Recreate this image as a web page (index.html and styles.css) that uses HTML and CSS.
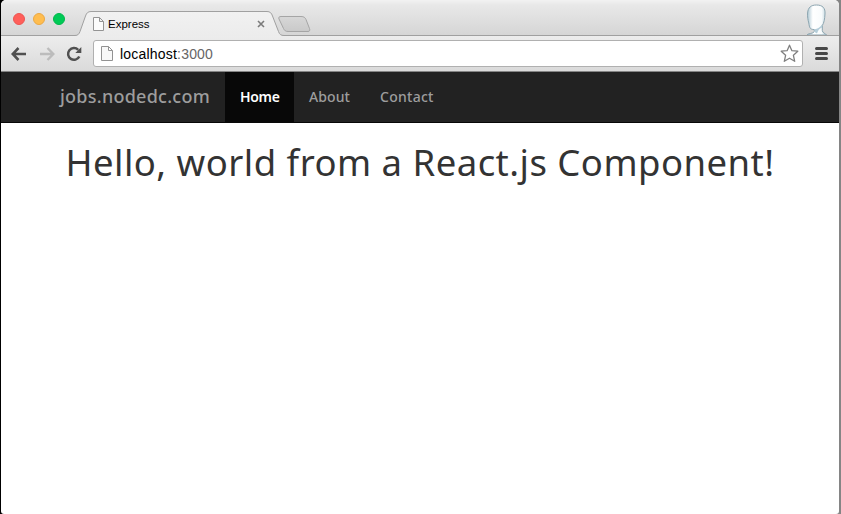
FILE: index.html
```
<!DOCTYPE html>
<html lang="en">
<head>
<meta charset="utf-8">
<title>Express</title>
<link rel="stylesheet" href="styles.css">
</head>
<body>
<div class="window">
  <header class="tabstrip">
    <div class="lights"><i class="light red"></i><i class="light amber"></i><i class="light green"></i></div>
    <div class="tab">
      <svg class="tab-shape" width="240" height="26" viewBox="0 0 240 26">
        <defs>
          <linearGradient id="tabfill" x2="0" y2="1"><stop stop-color="#f1f1f1"/><stop offset="1" stop-color="#ececec"/></linearGradient>
          <linearGradient id="newfill" x2="0" y2="1"><stop stop-color="#d7d7d7"/><stop offset="1" stop-color="#c9c9c9"/></linearGradient>
        </defs>
        <path d="M0 24.500C3 24.500 4 23 5 20.500L10.500 5C11.500 2 13 .5 16 .5H192C195 .5 196.500 2 197.500 5L203.500 20.500C204.500 23.500 206 24.500 209 24.500V26H0Z" fill="url(#tabfill)"/>
        <path d="M0 24.500C3 24.500 4 23 5 20.500L10.500 5C11.500 2 13 .5 16 .5H192C195 .5 196.500 2 197.500 5L203.500 20.500C204.500 23.500 206 24.500 209 24.500" fill="none" stroke="#a0a0a0"/>
        <path d="M206 5.500H226C229 5.500 230 6.500 231 8.500L234.500 17.500C235.300 19.500 234.500 20.500 233 20.500H213C210.500 20.500 209.500 19.500 208.500 17.500L204 8C203.300 6.500 204 5.500 206 5.500Z" fill="url(#newfill)" stroke="#a5a5a5"/>
      </svg>
      <div class="tab-content">
        <svg width="11" height="14" viewBox="0 0 11 14"><path d="M.5.500H6.500L10.500 4.500V13.500H.5ZM6.500.500V4.500H10.500" fill="#fbfbfb" stroke="#949494"/></svg>
        <span class="tab-title">Express</span>
        <svg class="close" width="8" height="8" viewBox="0 0 8 8"><path d="M1 1L7 7M7 1L1 7" stroke="#7b7b7b" stroke-width="1.600"/></svg>
      </div>
    </div>
    <svg class="profile" width="22" height="31" viewBox="0 0 22 31">
      <defs><linearGradient id="face"><stop stop-color="#a9c4d0"/><stop offset=".3" stop-color="#fff"/><stop offset=".75" stop-color="#f8fbfc"/><stop offset="1" stop-color="#bcd2dc"/></linearGradient></defs>
      <path d="M1 31C2 29 7.500 30 8.300 27.500V25.500C4 25.500 3.500 24 2.800 19C2 16 1.300 13 1.600 9C2 3.500 5 1 10.500 1C16.500 1 19.500 4 19 10C18.700 15 18 19 16.300 21.500V26.500C16.500 29.500 19.500 29 20.500 31Z" fill="url(#face)" stroke="#8ca5b0"/>
      <path d="M8.600 25.300C11.500 25 14.500 23 16 20.500V23.500C13 24.500 12 26.500 11 29.500L8.600 28Z" fill="#b5cdd9"/>
    </svg>
  </header>
  <div class="toolbar">
    <svg width="16" height="14" viewBox="0 0 16 14"><path d="M15 7H2M7.500 1L1.700 7L7.500 13" fill="none" stroke="#505050" stroke-width="2.600"/></svg>
    <svg class="forward" width="16" height="14" viewBox="0 0 16 14"><path d="M1 7H14M8.500 1L14.300 7L8.500 13" fill="none" stroke="#bcbcbc" stroke-width="2.400"/></svg>
    <svg class="reload" width="16" height="16" viewBox="0 0 16 16"><path d="M12.200 3.800A5.900 5.900 0 1 0 13.300 10.500" fill="none" stroke="#505050" stroke-width="2.500"/><path d="M15.300 1V7H9.300Z" fill="#505050"/></svg>
    <div class="address">
      <svg width="12" height="15" viewBox="0 0 12 15"><path d="M.5.500H7.500L11.500 4.500V14.500H.5ZM7.500.500V4.500H11.500" fill="#f8f8f8" stroke="#929292"/></svg>
      <span class="url">localhost<span class="port">:3000</span></span>
      <svg class="star" width="19" height="19" viewBox="0 0 19 19"><path d="M9.500 1.200L11.900 6.700L17.800 7.200L13.400 11.300L14.700 17.300L9.500 14.200L4.300 17.300L5.600 11.300L1.200 7.200L7.100 6.700Z" fill="#fff" stroke="#808080" stroke-width="1.300" stroke-linejoin="round"/></svg>
    </div>
    <svg class="menu" width="13" height="13" viewBox="0 0 13 13"><path d="M1.500 1.500H11.500M1.500 6.500H11.500M1.500 11.500H11.500" stroke="#484848" stroke-width="3" stroke-linecap="round"/></svg>
  </div>
  <nav class="navbar">
    <a class="brand">jobs.nodedc.com</a>
    <a class="link active">Home</a>
    <a class="link">About</a>
    <a class="link contact">Contact</a>
  </nav>
  <main><h1>Hello, world from a React.js Component!</h1></main>
</div>
</body>
</html>
```
FILE: styles.css
```
* { box-sizing: border-box; }
body { margin: 0; background: linear-gradient(90deg, #000 0 50%, #858585 50%); }
svg { display: block; flex: none; }
.window {
  width: 838px; height: 514px; margin-left: 1px; overflow: hidden;
  display: flex; flex-direction: column; background: #fff;
  border-radius: 5px 5px 3px 3px;
}
.tabstrip {
  flex: none; height: 36px; display: flex; align-items: flex-end;
  background: linear-gradient(#f2f2f2, #e8e8e8 5px, #d5d5d5);
  box-shadow: inset 0 -1px #a0a0a0;
}
.lights { display: flex; gap: 8px; padding: 0 10px 11px 12px; width: 74px; }
.light { flex: none; width: 12px; height: 12px; border-radius: 50%; }
.red { background: #ff5f5a; border: 1px solid #ec5552; }
.amber { background: #ffbd4f; border: 1px solid #eaa844; }
.green { background: #00ca56; border: 1px solid #00b74b; }
.tab { display: grid; width: 240px; height: 25px; }
.tab > * { grid-area: 1 / 1; }
.tab-content { display: flex; align-items: center; padding: 1px 0 0 18px; width: 190px; height: 25px; }
.tab-title { margin-left: 4px; font: 11.5px "Liberation Sans", sans-serif; color: #000; }
.close { margin-left: auto; }
.profile { margin: 0 11px 1px auto; }
.toolbar {
  flex: none; height: 36px; display: flex; align-items: center;
  padding: 0 10px; background: linear-gradient(#ededed, #dadada);
  border-bottom: 1px solid #858585;
}
.forward { margin-left: 12px; }
.reload { margin-left: 11px; }
.address {
  width: 710px; height: 27px; margin-left: 11px; padding: 0 3px 0 7px;
  display: flex; align-items: center; background: #fff;
  border: 1px solid #b0b0b0; border-radius: 3px;
}
.url { margin-left: 7px; font: 14px "Liberation Sans", sans-serif; color: #000; letter-spacing: .2px; }
.port { color: #666; }
.star { margin-left: auto; }
.menu { margin-left: 12px; }
.navbar {
  flex: none; height: 51px; display: flex; background: #222;
  border-bottom: 1px solid #080808; padding-left: 44px;
  font-family: "Noto Sans", sans-serif; color: #9d9d9d; white-space: nowrap;
}
.brand { display: flex; align-items: center; width: 180px; padding: 0 0 2px 15px; font-size: 18px; font-weight: 500; letter-spacing: .25px; }
.link { display: flex; align-items: center; padding: 0 15px 2px; font-size: 14px; font-weight: 500; letter-spacing: .1px; }
.active { width: 69px; color: #fff; background: #080808; font-weight: 600; letter-spacing: -.3px; }
.contact { letter-spacing: .25px; }
main { text-align: center; }
h1 {
  margin: 12px 0 0; font: 400 36.5px/54px "Noto Sans", sans-serif;
  letter-spacing: .47px; color: #333; white-space: nowrap;
}
```
